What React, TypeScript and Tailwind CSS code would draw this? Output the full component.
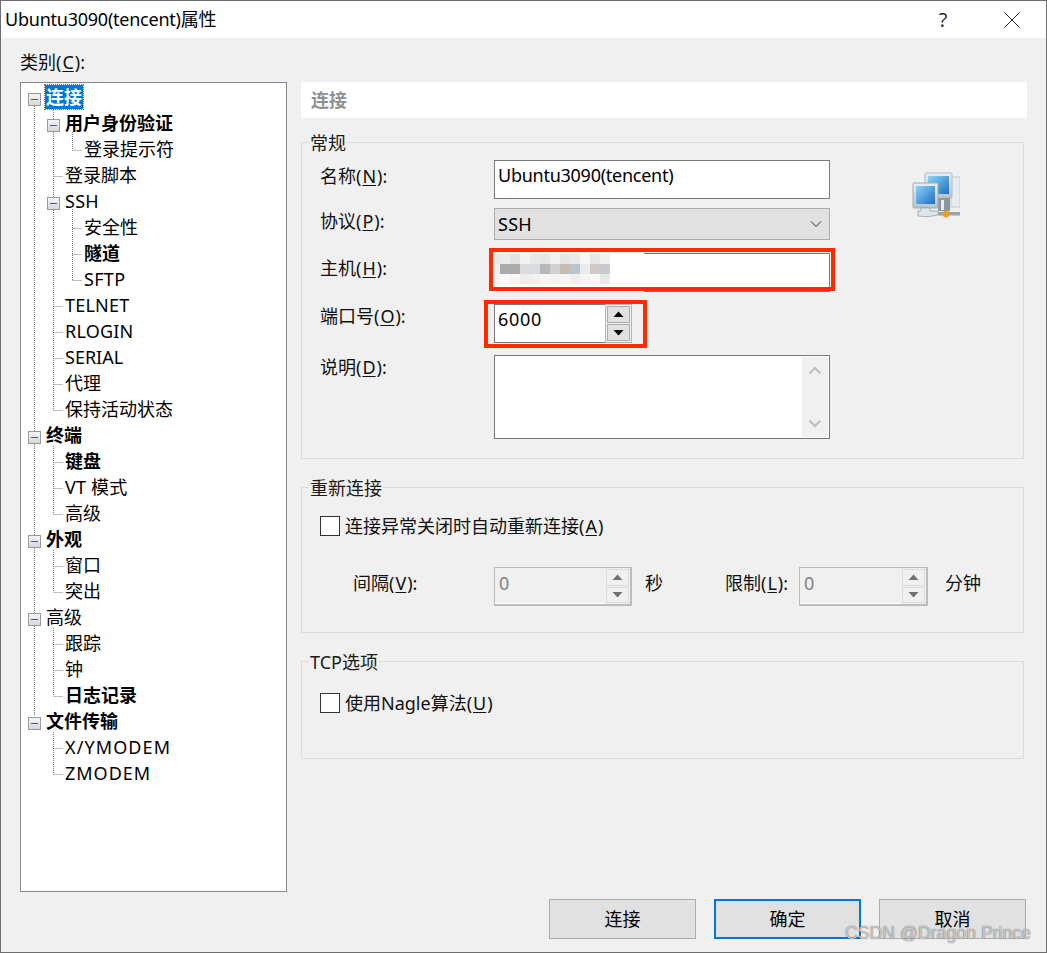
import React from "react";

const FONT = "font-['Noto_Sans','Noto_Sans_CJK_SC',sans-serif]";

type Row = { t: string; lvl: 0 | 1 | 2; bold?: boolean; tog?: boolean; sel?: boolean; track?: string };
const rows: Row[] = [
  { t: "连接", lvl: 0, bold: true, tog: true, sel: true },
  { t: "用户身份验证", lvl: 1, bold: true, tog: true },
  { t: "登录提示符", lvl: 2 },
  { t: "登录脚本", lvl: 1 },
  { t: "SSH", lvl: 1, tog: true, track: "tracking-[0.3px]" },
  { t: "安全性", lvl: 2 },
  { t: "隧道", lvl: 2, bold: true },
  { t: "SFTP", lvl: 2, track: "tracking-[0.3px]" },
  { t: "TELNET", lvl: 1, track: "tracking-[0.2px]" },
  { t: "RLOGIN", lvl: 1, track: "tracking-[0.2px]" },
  { t: "SERIAL", lvl: 1 },
  { t: "代理", lvl: 1 },
  { t: "保持活动状态", lvl: 1 },
  { t: "终端", lvl: 0, bold: true, tog: true },
  { t: "键盘", lvl: 1, bold: true },
  { t: "VT 模式", lvl: 1, track: "tracking-[0.2px]" },
  { t: "高级", lvl: 1 },
  { t: "外观", lvl: 0, bold: true, tog: true },
  { t: "窗口", lvl: 1 },
  { t: "突出", lvl: 1 },
  { t: "高级", lvl: 0, tog: true },
  { t: "跟踪", lvl: 1 },
  { t: "钟", lvl: 1 },
  { t: "日志记录", lvl: 1, bold: true },
  { t: "文件传输", lvl: 0, bold: true, tog: true },
  { t: "X/YMODEM", lvl: 1, track: "tracking-[1.1px]" },
  { t: "ZMODEM", lvl: 1, track: "tracking-[1px]" },
];

function Toggle() {
  return (
    <span className="w-[13px] h-[13px] mr-[5px] mt-[4px] shrink-0 border border-[#9a9a9a] bg-gradient-to-b from-[#f4f4f4] to-[#d8d8d8] flex items-center justify-center">
      <span className="w-[7px] h-px bg-[#3c5aa6]" />
    </span>
  );
}

function TreeLines() {
  // coordinates are relative to the tree box inner edge (x-21, y-83)
  const segs: [number, number, number, number][] = [];
  const v = (x: number, a: number, b: number) => segs.push([x - 21, a - 83, x - 21, b - 83]);
  const h = (y: number, a: number, b: number) => segs.push([a - 21, y - 83, b - 21, y - 83]);
  v(34, 106, 715);
  v(53, 110, 410);
  v(72, 132, 150);
  h(150, 72, 82);
  h(176, 53, 63);
  v(72, 209, 280);
  [228, 254, 280].forEach((y) => h(y, 72, 82));
  [306, 332, 358, 384, 410].forEach((y) => h(y, 53, 63));
  v(53, 446, 514);
  [462, 488, 514].forEach((y) => h(y, 53, 63));
  v(53, 550, 592);
  [566, 592].forEach((y) => h(y, 53, 63));
  v(53, 628, 696);
  [644, 670, 696].forEach((y) => h(y, 53, 63));
  v(53, 732, 774);
  [748, 774].forEach((y) => h(y, 53, 63));
  return (
    <svg className="absolute left-0 top-0 w-[265px] h-[720px] pointer-events-none" viewBox="0 0 265 720">
      {segs.map((s, i) => (
        <line
          key={i}
          x1={s[0] + 0.5}
          y1={s[1]}
          x2={s[2] + 0.5}
          y2={s[3]}
          stroke="#7a7a7a"
          strokeWidth={1}
          strokeDasharray="1 1"
          transform={s[1] === s[3] ? "translate(0 0.5)" : undefined}
        />
      ))}
    </svg>
  );
}

function Tree() {
  return (
    <div className="relative w-[267px] h-[810px] bg-white border border-[#828790] pt-[1px]">
      <TreeLines />
      <div className="relative">
        {rows.map((r, i) => {
          const pad =
            r.lvl === 2
              ? "pl-[63px]"
              : r.lvl === 1
              ? r.tog
                ? "pl-[26px]"
                : "pl-[44px]"
              : "pl-[7px]";
          return (
            <div key={i} className={`h-[26px] flex items-center text-[18px] leading-[26px] text-black ${pad}`}>
              {r.tog && <Toggle />}
              <span
                className={
                  (r.bold ? "font-bold " : "") +
                  (r.track ? r.track + " " : "") +
                  (r.sel
                    ? "bg-[#0078d7] text-white h-[24px] leading-[24px] outline-1 outline-dotted outline-[#b06a20] -ml-[1px] px-[1px]"
                    : "")
                }
              >
                {r.t}
              </span>
            </div>
          );
        })}
      </div>
    </div>
  );
}

function Ul({ children }: { children: React.ReactNode }) {
  return <span className="underline underline-offset-2 px-[1px]">{children}</span>;
}

function Arrow({ up, color }: { up?: boolean; color: string }) {
  return (
    <svg width="11" height="7" viewBox="0 0 11 7">
      <path d={up ? "M5.5 0.5 L10.5 6 L0.5 6 Z" : "M0.5 1 L10.5 1 L5.5 6.5 Z"} fill={color} />
    </svg>
  );
}

function SpinButtons({ disabled }: { disabled?: boolean }) {
  const c = disabled ? "#707070" : "#000000";
  const btn = disabled
    ? "flex-1 border border-[#dcdcdc] bg-[#f0f0f0] flex items-center justify-center"
    : "flex-1 border border-[#adadad] bg-[#e1e1e1] flex items-center justify-center";
  return (
    <div className="w-[25px] shrink-0 flex flex-col gap-px p-px bg-[#f0f0f0]">
      <div className={btn}>
        <Arrow up color={c} />
      </div>
      <div className={btn}>
        <Arrow color={c} />
      </div>
    </div>
  );
}

function DisabledSpin({ w }: { w: string }) {
  return (
    <div className={`${w} h-[39px] flex border-2 border-[#bcbcbc] border-l-1 border-t-1 bg-[#f0f0f0] shrink-0`}>
      <div className="flex-1 pl-[4px] text-[18px] leading-[30px] text-[#808080] border-b border-white">0</div>
      <SpinButtons disabled />
    </div>
  );
}

function Group({ title, cls, children }: { title: string; cls: string; children: React.ReactNode }) {
  return (
    <div className={`relative w-[723px] border border-[#dcdcdc] ${cls}`}>
      <span className="absolute left-[7px] -top-[13px] px-[1px] bg-[#f0f0f0] text-[18px] leading-[26px] text-[#1a1a1a]">
        {title}
      </span>
      {children}
    </div>
  );
}

const mosaic: string[][] = [
  ["#e8e8e8", "#ebebeb", "#e2e2e2", "#f2f2f2", "#e8e8e8", "#e6e6e6", "#f0f2f4", "#e6e6e6", "#ebe9e7", "#f6f6f6", "#e8e8e8", "#f0f0f0"],
  ["#f0f0f0", "#ababab", "#ababab", "#dedcda", "#d8dce0", "#b8b8b8", "#d0d2d2", "#c4bcb4", "#bcc4ca", "#e8ecf0", "#cfcac8", "#c8cacc"],
  ["#f4f4f4", "#fbfbfb", "#f5f5f5", "#eeedec", "#f0f0ee", "#f6f6f6", "#f3f3f3", "#f2f4f6", "#efefed", "#f3f5f7", "#f8f6f6", "#e6e8ea"],
];

function NetIcon() {
  return (
    <svg width="48" height="48" viewBox="0 0 48 48" className="block blur-[0.4px]">
      <defs>
        <linearGradient id="scr" x1="0" y1="0" x2="1" y2="1">
          <stop offset="0" stopColor="#8fd4f5" />
          <stop offset="1" stopColor="#1c6fc4" />
        </linearGradient>
        <linearGradient id="bez" x1="0" y1="0" x2="0" y2="1">
          <stop offset="0" stopColor="#e8f0f5" />
          <stop offset="1" stopColor="#b8c4cc" />
        </linearGradient>
      </defs>
      <rect x="39" y="5" width="9" height="30" fill="#e6ecf0" stroke="#c2ccd2" />
      <rect x="13" y="1" width="27" height="25" rx="1" fill="url(#bez)" stroke="#aebac2" />
      <rect x="16" y="4" width="21" height="18" fill="url(#scr)" />
      <path d="M26 26 h12 v13 h-12 z" fill="#8a989e" />
      <path d="M29 28 h3 v10 h-3 z" fill="#e8eef2" />
      <rect x="1" y="11" width="25" height="25" rx="1" fill="url(#bez)" stroke="#9fabb3" />
      <rect x="4" y="14" width="19" height="18" fill="url(#scr)" />
      <path d="M9 36 h9 v3 h8 v4 q-10 3 -20 1 v-5 h3 z" fill="#dfe6ea" stroke="#8e9ba3" strokeWidth="0.7" />
      <rect x="26" y="40" width="22" height="3.5" fill="#98a4aa" />
      <circle cx="34" cy="42" r="3.4" fill="#f59a1c" />
    </svg>
  );
}

export default function App() {
  return (
    <div
      className={`${FONT} relative w-[1047px] h-[953px] bg-[#f0f0f0] overflow-hidden border-b border-r border-l border-t border-[#6e6e6e] text-[18px] text-[#111]`}
    >
      {/* title bar */}
      <div className="h-[37px] bg-white flex items-center">
        <span className="pl-[4px] text-[18px] leading-[34px] pb-[2px] flex-1 text-black tracking-[-0.24px]">
          Ubuntu3090(tencent)属性
        </span>
        <span className="text-[20px] text-[#333] w-[24px] text-center mr-[49px]">?</span>
        <svg width="16" height="16" viewBox="0 0 16 16" className="mr-[26px]">
          <path d="M0.5 0.5 L15.5 15.5 M15.5 0.5 L0.5 15.5" stroke="#222" strokeWidth="1" fill="none" />
        </svg>
      </div>

      <div className="flex pl-[19px] pt-[12px]">
        {/* left column */}
        <div className="w-[267px] mr-[14px] shrink-0">
          <div className="h-[32px] leading-[24px] text-[18px]">
            类别(<Ul>C</Ul>):
          </div>
          <Tree />
        </div>

        {/* right column */}
        <div className="w-[726px] pt-[32px]">
          <div className="h-[36px] bg-white pl-[10px] text-[18px] font-bold leading-[36px] text-[#909090]">连接</div>

          <Group title="常规" cls="mt-[24px] h-[317px] pt-[17px] pl-[18px] flex">
            <div className="w-[510px] shrink-0">
              <div className="flex h-[39px]">
                <div className="w-[174px] leading-[32px]">
                  名称(<Ul>N</Ul>):
                </div>
                <div className="w-[336px] h-[39px] border border-[#7a7a7a] bg-white pl-[3px] leading-[28px] text-black tracking-[-0.26px]">
                  Ubuntu3090(tencent)
                </div>
              </div>
              <div className="flex mt-[9px]">
                <div className="w-[174px] leading-[26px]">
                  协议(<Ul>P</Ul>):
                </div>
                <div className="w-[336px] h-[32px] border border-[#adadad] bg-[#e1e1e1] pl-[3px] leading-[30px] text-black flex items-center justify-between pr-[7px]">
                  <span className="tracking-[0.3px]">SSH</span>
                  <svg width="12" height="8" viewBox="0 0 12 8">
                    <path d="M1 1.5 L6 6.5 L11 1.5" stroke="#333" strokeWidth="1" fill="none" />
                  </svg>
                </div>
              </div>
              <div className="flex mt-[13px]">
                <div className="w-[174px] leading-[30px]">
                  主机(<Ul>H</Ul>):
                </div>
                <div className="relative w-[336px] h-[39px] border border-[#7a7a7a] bg-white">
                  {/* blurred host name */}
                  <div className="absolute -left-[1px] -top-[1px] -bottom-[1px] w-[150px] bg-white" />
                  <div className="absolute -left-[5px] top-0 flex flex-col">
                    {mosaic.map((r, i) => (
                      <div key={i} className="flex">
                        {r.map((c, j) => (
                          <div key={j} className="w-[10px] h-[10px]" style={{ background: c }} />
                        ))}
                      </div>
                    ))}
                  </div>
                  <div className="absolute -left-[6px] -top-[6px] w-[346px] h-[43px] border-[4px] border-[#ff2a00]" />
                </div>
              </div>
              <div className="flex mt-[12px]">
                <div className="w-[174px] leading-[24px]">
                  端口号(<Ul>O</Ul>):
                </div>
                <div className="relative flex">
                  <div className="w-[111px] h-[39px] border border-[#7a7a7a] border-r-0 bg-white pl-[3px] leading-[28px] text-black tracking-[0.7px]">
                    6000
                  </div>
                  <div className="h-[39px] border border-[#b5b5b5] flex">
                    <SpinButtons />
                  </div>
                  <div className="absolute -left-[10px] -top-[4px] w-[163px] h-[48px] border-[4px] border-[#ff2a00]" />
                </div>
              </div>
              <div className="flex mt-[12px]">
                <div className="w-[174px] leading-[24px]">
                  说明(<Ul>D</Ul>):
                </div>
                <div className="w-[336px] h-[84px] border border-[#7a7a7a] bg-white flex justify-end p-px">
                  <div className="w-[26px] bg-[#f0f0f0] flex flex-col items-center justify-between py-[9px]">
                    <svg width="14" height="9" viewBox="0 0 14 9">
                      <path d="M1.5 7.5 L7 2 L12.5 7.5" stroke="#c0c0c0" strokeWidth="2.2" fill="none" />
                    </svg>
                    <svg width="14" height="9" viewBox="0 0 14 9">
                      <path d="M1.5 1.5 L7 7 L12.5 1.5" stroke="#c0c0c0" strokeWidth="2.2" fill="none" />
                    </svg>
                  </div>
                </div>
              </div>
            </div>
            <div className="ml-[82px] mt-[12px]">
              <NetIcon />
            </div>
          </Group>

          <Group title="重新连接" cls="mt-[28px] h-[146px] pt-[28px] pl-[18px]">
            <div className="flex items-center h-[20px]">
              <span className="w-[20px] h-[20px] border border-[#333] bg-white mr-[5px]" />
              <span className="leading-[22px]">
                连接异常关闭时自动重新连接(<Ul>A</Ul>)
              </span>
            </div>
            <div className="flex mt-[31px] h-[39px]">
              <div className="w-[174px] pl-[33px] leading-[33px]">
                间隔(<Ul>V</Ul>):
              </div>
              <DisabledSpin w="w-[138px]" />
              <div className="w-[93px] pl-[13px] leading-[33px]">秒</div>
              <div className="w-[74px] mr-[0px] leading-[33px]">
                限制(<Ul>L</Ul>):
              </div>
              <DisabledSpin w="w-[129px]" />
              <div className="pl-[17px] leading-[33px]">分钟</div>
            </div>
          </Group>

          <Group title="TCP选项" cls="mt-[28px] h-[98px] pt-[31px] pl-[18px]">
            <div className="flex items-center h-[20px]">
              <span className="w-[20px] h-[20px] border border-[#333] bg-white mr-[5px]" />
              <span className="leading-[20px]">
                使用Nagle算法(<Ul>U</Ul>)
              </span>
            </div>
          </Group>
        </div>
      </div>

      {/* buttons */}
      <div className="flex justify-end gap-[18px] pr-[20px] mt-[7px]">
        <button className="w-[147px] h-[40px] border border-[#adadad] bg-[#e1e1e1] text-[18px] text-black">连接</button>
        <button className="w-[147px] h-[40px] border-2 border-[#0078d7] bg-[#e1e1e1] text-[18px] text-black">确定</button>
        <button className="w-[147px] h-[40px] border border-[#adadad] bg-[#e1e1e1] text-[18px] text-black">取消</button>
      </div>

      {/* watermark */}
      <span className="absolute left-[844px] top-[920px] font-['Liberation_Sans',sans-serif] text-[17.7px] leading-[24px] text-[#ffffffb0] [text-shadow:0_0_1px_#333]">
        CSDN @Dragon Prince
      </span>
    </div>
  );
}
